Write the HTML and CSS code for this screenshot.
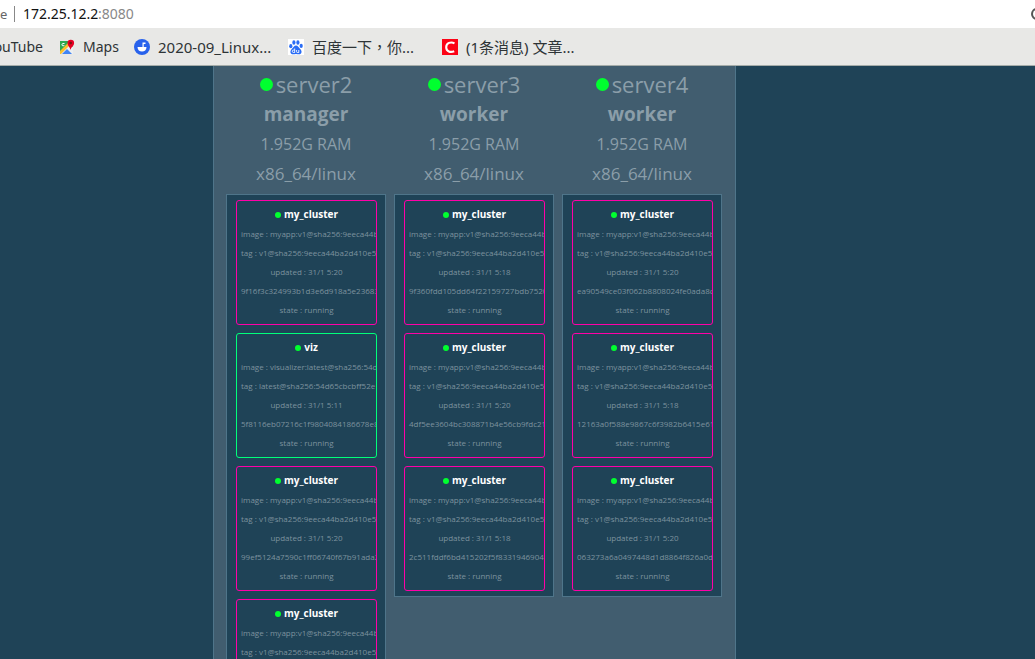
FILE: index.html
```html
<!DOCTYPE html>
<html lang="en">
<head>
<meta charset="utf-8">
<title>Visualizer</title>
<link rel="stylesheet" href="styles.css">
</head>
<body>
<header class="browser">
  <div class="address">
    <span class="identity">e</span>
    <label class="url"><input class="host" type="text" value="172.25.12.2" aria-label="Address"><span class="port">:8080</span></label>
    <button class="reload" aria-label="Page action"><svg width="12" height="12" viewBox="0 0 12 12"><circle cx="6" cy="6" r="5" fill="none" stroke="#555" stroke-width="2"/></svg></button>
  </div>
  <nav class="bookmarks">
    <a class="bookmark first" href="#">YouTube</a>
    <a class="bookmark maps" href="#"><svg width="16" height="16" viewBox="0 0 16 16"><path d="M1 2h13v13H1z" fill="#2da94f"/><path d="M1 15 11 5l3 3v7z" fill="#eceff1"/><path d="M1 12 9 4l2 2-9 9H1z" fill="#fbc02d"/><path d="M3 15l5-5 5 5z" fill="#4285f4"/><path d="M5.500 4.500H4a1.200 1.200 0 1 0 1.300 1.500" fill="none" stroke="#fff"/><path d="M11.500 11C11 8 8.500 7 8.500 4a3.300 3.300 0 0 1 6.600 0c0 3-3.100 4-3.600 7z" fill="#e60023"/><circle cx="11.700" cy="4" r="1.300" fill="#7c1010"/></svg>Maps</a>
    <a class="bookmark long" href="#"><svg width="16" height="16" viewBox="0 0 16 16"><circle cx="8" cy="8" r="8" fill="#2862ec"/><path d="M8.500 8V3.500h3V5H9.700v4" fill="#fff"/><path d="M3.500 8H12.500C12.500 11 10.500 12.500 8 12.500S3.500 11 3.500 8z" fill="#fff"/></svg>2020-09_Linux...</a>
    <a class="bookmark long" href="#"><svg width="16" height="16" viewBox="0 0 16 16"><path d="M0 0h16v16H0z" fill="#fff"/><g fill="#2a6df5"><ellipse cx="2.800" cy="7.200" rx="1.600" ry="2.100"/><ellipse cx="5.900" cy="3.500" rx="1.600" ry="2.200"/><ellipse cx="9.900" cy="3.500" rx="1.600" ry="2.200"/><ellipse cx="13.200" cy="6.900" rx="1.600" ry="2.100"/><path d="M8 6.500c2 0 2.600 2 4.200 3.400 2.200 2 1.600 5.300-1.200 5.300-1.200 0-2-.3-3-.3s-1.800.3-3 .3c-2.800 0-3.400-3.300-1.200-5.300C5.400 8.500 6 6.500 8 6.500z"/></g><path d="M6.700 9.500v4H5.500a1.200 1.200 0 0 1 0-2.400h1.200M8.600 11v1.700q0 .8.800.8h1.400V11" fill="none" stroke="#fff" stroke-width=".9"/></svg><span>百度一下<span class="comma" lang="zh-TW">，</span>你...</span></a>
    <a class="bookmark long" href="#"><svg width="16" height="16" viewBox="0 0 16 16"><path d="M0 0h16v16H0z" fill="#fc0316"/><path d="M12.500 4.300C9 2.400 4.200 3.800 4.200 8.300c0 4.300 4.300 5.500 8 3.900" fill="none" stroke="#fff" stroke-width="2.100"/></svg>(1条消息) 文章...</a>
  </nav>
</header>
<main class="page">
  <div class="cluster" id="cluster"></div>
</main>
<script src="app.js"></script>
</body>
</html>
```
FILE: styles.css
```css
* { box-sizing: border-box; }

body {
  margin: 0;
  height: 100vh;
  display: flex;
  flex-direction: column;
  overflow: hidden;
  background: #1f4357;
  font-family: "Open Sans", sans-serif;
}

.browser {
  flex: none;
  color: #2e3436;
  font: 14px/20px "Noto Sans", "Noto Sans CJK SC", sans-serif;
}

.address {
  display: flex;
  align-items: center;
  height: 28px;
  background: #fff;
}

.identity {
  width: 15px;
  height: 16px;
  line-height: 16px;
  font-size: 13px;
  border-right: 1px solid #888;
  color: #666;
}

.url { display: flex; flex: 1; padding-left: 8px; }

.host {
  width: 75px;
  field-sizing: content;
  padding: 0;
  border: 0;
  outline: 0;
  background: none;
  color: #111;
  font: inherit;
  font-size: 13px;
}

.port { color: #888; font-size: 14px; }

.reload {
  width: 4px;
  height: 12px;
  padding: 0;
  border: 0;
  overflow: hidden;
  background: none;
  display: flex;
}

.reload svg { flex: none; }

.host, .port { font-size: 14px; }

.bookmarks {
  display: flex;
  align-items: center;
  height: 38px;
  background: #e8e8e6;
  border-bottom: 1px solid #a5aca9;
}

.bookmark {
  display: flex;
  align-items: center;
  gap: 8px;
  color: inherit;
  text-decoration: none;
  white-space: nowrap;
}

.first { width: 60px; margin-left: -12px; justify-content: flex-end; padding-right: 5px; }
.maps { width: 75px; margin-left: 11px; }
.long { width: 154px; font-size: 15px; }
.comma { font-family: "Noto Sans CJK TC", sans-serif; }

.page { flex: 1; min-height: 0; padding-left: 213px; }

.cluster {
  display: flex;
  gap: 8px;
  width: max-content;
  min-height: 100%;
  padding: 4px 13px 0 12px;
  border: solid #4f758a;
  border-width: 0 1px;
  background: #415d6f;
}

.node { width: 160px; color: #8b9ea9; text-align: center; }

.node-info { height: 124px; line-height: 30px; }

.name { display: flex; align-items: center; justify-content: center; gap: 3px; font-size: 22px; line-height: 29px; }
.role { font-size: 19px; font-weight: 700; }
.ram { font-size: 16px; }
.arch { font-size: 17px; line-height: 29px; }

.dot { flex: none; width: 13px; height: 13px; border-radius: 50%; background: #00ff2f; }

.tasks {
  display: grid;
  gap: 8px;
  padding: 5px 8px 5px 9px;
  border: 1px solid #4f758a;
  background: #1f4357;
}

.task {
  height: 125px;
  padding: 4px;
  border: 1px solid #ff00a8;
  border-radius: 3px;
  overflow: hidden;
  color: #7d929e;
  font-size: 8px;
  line-height: 19px;
  white-space: nowrap;
}

.task.viz { border-color: #00ff7b; }

.task-name { display: flex; align-items: center; justify-content: center; gap: 3px; color: #fff; font-size: 10px; font-weight: 700; }
.task-name .dot { width: 6px; height: 6px; }
```
FILE: app.js
```js
const app = (updated, id) => ({
  name: "my_cluster", image: "myapp:v1@sha256:9eeca44ba2d410e5",
  tag: "v1@sha256:9eeca44ba2d410e54", updated, id
});

const nodes = [
  { name: "server2", role: "manager", tasks: [
    app("5:20", "9f16f3c324993b1d3e6d918a5e23683"),
    { name: "viz", image: "visualizer:latest@sha256:54d65cbcbff52e",
      tag: "latest@sha256:54d65cbcbff52e", updated: "5:11", id: "5f8116eb07216c1f9804084186678e8" },
    app("5:20", "99ef5124a7590c1ff06740f67b91ada2"),
    app("5:20", "")
  ] },
  { name: "server3", role: "worker", tasks: [
    app("5:18", "9f360fdd105dd64f22159727bdb7520"),
    app("5:20", "4df5ee3604bc308871b4e56cb9fdc21"),
    app("5:18", "2c511fddf6bd415202f5f8331946904")
  ] },
  { name: "server4", role: "worker", tasks: [
    app("5:20", "ea90549ce03f062b8808024fe0ada8c"),
    app("5:18", "12163a0f588e9867c6f3982b6415e61"),
    app("5:20", "063273a6a0497448d1d8864f826a0d")
  ] }
];

const taskCard = t => `
  <article class="task ${t.name}">
    <div class="task-name"><span class="dot"></span>${t.name}</div>
    <div>image : ${t.image}</div>
    <div>tag : ${t.tag}</div>
    <div>updated : 31/1 ${t.updated}</div>
    <div>${t.id}</div>
    <div>state : running</div>
  </article>`;

document.getElementById("cluster").innerHTML = nodes.map(n => `
  <section class="node">
    <div class="node-info">
      <div class="name"><span class="dot"></span>${n.name}</div>
      <div class="role">${n.role}</div>
      <div class="ram">1.952G RAM</div>
      <div class="arch">x86_64/linux</div>
    </div>
    <div class="tasks">${n.tasks.map(taskCard).join("")}</div>
  </section>`).join("");
```
